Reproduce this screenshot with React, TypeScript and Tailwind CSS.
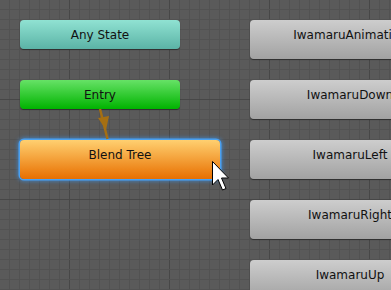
import React from "react";

const font = { fontFamily: '"DejaVu Sans", Verdana, sans-serif' };

function GrayNode({ label }: { label: string }) {
  return (
    <div className="w-[200px] h-[39px] shrink-0 rounded-[4px] bg-[linear-gradient(to_bottom,#cdcdcd,#a2a2a2)] shadow-[0_1px_1px_rgba(0,0,0,0.45)]">
      <div className="h-[29px] flex items-center justify-center text-[12px] text-[#111] whitespace-nowrap">{label}</div>
    </div>
  );
}

export default function App() {
  return (
    <div className="relative w-[391px] h-[290px] overflow-hidden bg-[#5a5a5a]" style={font}>
      <svg className="absolute inset-0" width="391" height="290">
        {Array.from({ length: 40 }).map((_, i) => (
          <rect key={"v" + i} x={9 + i * 10} y={0} width={1} height={290} fill={(9 + i * 10) % 100 === 69 ? "#474747" : "#525252"} />
        ))}
        {Array.from({ length: 29 }).map((_, i) => (
          <rect key={"h" + i} x={0} y={9 + i * 10} width={391} height={1} fill={(9 + i * 10) % 100 === 99 ? "#474747" : "#525252"} />
        ))}
      </svg>

      <div className="relative flex gap-[30px] pl-[20px] pt-[20px]">
        {/* left column */}
        <div className="flex flex-col gap-[31px] w-[200px] shrink-0">
          <div className="w-[160px] h-[29px] rounded-[4px] bg-[linear-gradient(to_bottom,#90e2d2,#5bb3a6)] shadow-[0_1px_1px_rgba(0,0,0,0.45)] flex items-center justify-center text-[12px] text-[#111]">
            Any State
          </div>
          <div className="w-[160px] h-[29px] rounded-[4px] bg-[linear-gradient(to_bottom,#66e266,#00b300)] shadow-[0_1px_1px_rgba(0,0,0,0.45)] flex items-center justify-center text-[12px] text-[#111]">
            Entry
          </div>
          <div className="w-[200px] h-[39px] rounded-[4px] bg-[linear-gradient(to_bottom,#ffd070,#e86f00)] shadow-[0_0_0_1.5px_#4aa0f0,0_0_4px_2px_rgba(60,150,240,0.7)]">
            <div className="h-[29px] flex items-center justify-center text-[12px] text-[#111]">Blend Tree</div>
          </div>
        </div>

        {/* right column */}
        <div className="flex flex-col gap-[21px] shrink-0">
          <GrayNode label="IwamaruAnimation" />
          <GrayNode label="IwamaruDown" />
          <GrayNode label="IwamaruLeft" />
          <GrayNode label="IwamaruRight" />
          <GrayNode label="IwamaruUp" />
        </div>
      </div>

      {/* transition arrow */}
      <svg className="absolute left-0 top-0 pointer-events-none" width="391" height="290">
        <line x1="100" y1="109" x2="107.5" y2="139" stroke="#a66f12" strokeWidth="2.5" />
        <polygon points="98,118 109,116 106,130" fill="#a66f12" />
      </svg>

      {/* cursor */}
      <svg className="absolute left-[212px] top-[161px]" width="20" height="32">
        <polygon
          points="0.5,0.5 0.5,24 6,18.5 10.5,29 14,27.5 9.5,17 16.5,17"
          fill="#fff"
          stroke="#000"
          strokeWidth="1"
          strokeLinejoin="miter"
        />
      </svg>
    </div>
  );
}
